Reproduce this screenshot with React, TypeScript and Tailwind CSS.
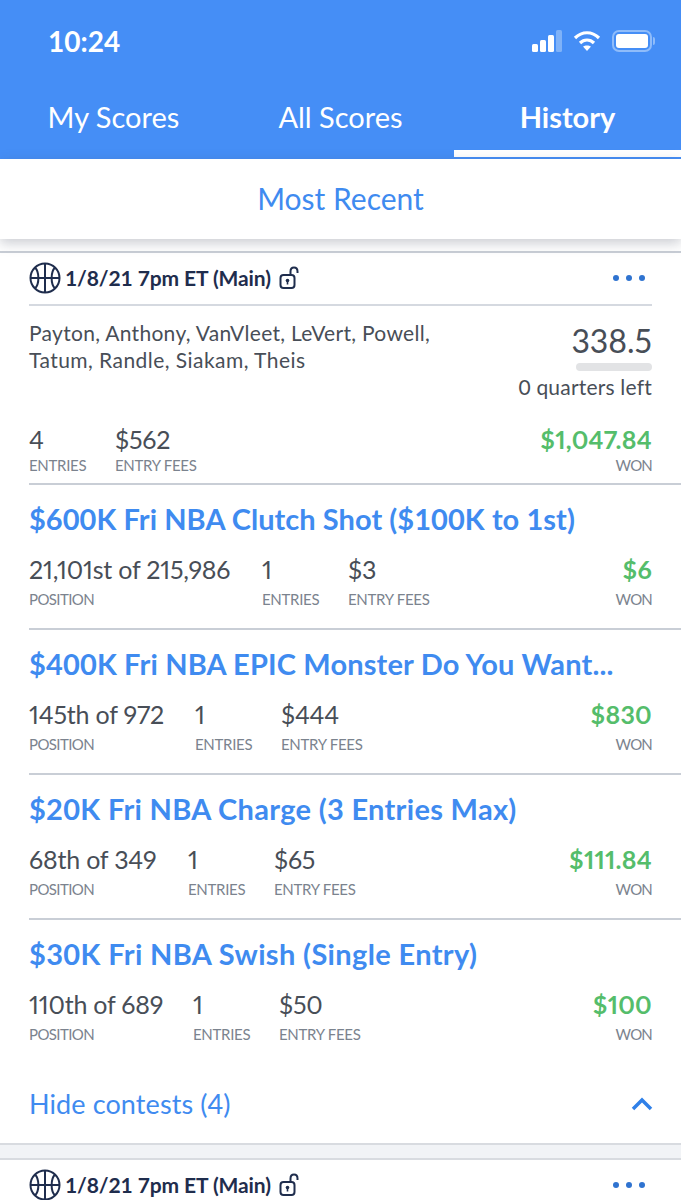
import React from "react";

const font = { fontFamily: "Lato, 'Open Sans', sans-serif" };

function Ball() {
  return (
    <svg viewBox="0 0 32 32" className="w-[32px] h-[32px] shrink-0" fill="none" stroke="#1f2d4d" strokeWidth="2">
      <circle cx="16" cy="16" r="14.5" />
      <path d="M1.5 16H30.5M16 1.5V30.5M6 5.5C10.5 10 10.5 22 6 26.5M26 5.5C21.5 10 21.5 22 26 26.5" />
    </svg>
  );
}

function Lock() {
  return (
    <svg viewBox="0 0 20 24" className="w-[20px] h-[24px] shrink-0" fill="none" stroke="#1f2d4d" strokeWidth="2">
      <rect x="1.5" y="9" width="14" height="13" rx="3" />
      <path d="M11.5 9V5.5C11.5 3 13 1.5 15 1.5C17 1.5 18.5 3 18.5 5.5V7" />
      <circle cx="8.5" cy="14.5" r="1.8" fill="#1f2d4d" stroke="none" />
      <path d="M8.5 15V18.5" strokeWidth="1.6" />
    </svg>
  );
}

function Dots() {
  return (
    <div className="flex gap-[7px] pr-[7px]">
      <span className="w-[6px] h-[6px] rounded-full bg-[#2f73d0]" />
      <span className="w-[6px] h-[6px] rounded-full bg-[#2f73d0]" />
      <span className="w-[6px] h-[6px] rounded-full bg-[#2f73d0]" />
    </div>
  );
}

function Stat({ value, label, className = "", tight = false, labelClass = "tracking-[-0.3px]" }: { value: string; label: string; className?: string; tight?: boolean; labelClass?: string }) {
  return (
    <div className={"flex flex-col whitespace-nowrap " + className}>
      <span className="text-[25px] leading-[30px] text-[#484e57] proportional-nums tracking-[-0.2px]">{value}</span>
      <span className={"text-[15px] leading-[20px] text-[#7b838e] " + labelClass + " " + (tight ? "mt-[1px]" : "mt-[5px]")}>{label}</span>
    </div>
  );
}

function Won({ value, tight = false }: { value: string; tight?: boolean }) {
  return (
    <div className="ml-auto flex flex-col items-end">
      <span className="text-[25px] leading-[30px] font-bold text-[#55bd6b] proportional-nums tracking-[0.25px]">{value}</span>
      <span className={"text-[15px] leading-[20px] text-[#7b838e] tracking-[-0.8px] " + (tight ? "mt-[1px]" : "mt-[5px]")}>WON</span>
    </div>
  );
}

function Contest({ title, titleClass, pos, posW, fee, won, last = false }: { title: string; titleClass: string; pos: string; posW: string; fee: string; won: string; last?: boolean }) {
  return (
    <div className={"h-[145px] pt-[14px] " + (last ? "" : "border-b-2 border-[#c9ced6]")}>
      <div className={"text-[29px] leading-[40px] font-bold text-[#3f8bf0] whitespace-nowrap " + titleClass}>{title}</div>
      <div className="flex mt-[15px]">
        <Stat value={pos} label="POSITION" className={posW} labelClass="tracking-[-0.6px]" />
        <Stat value="1" label="ENTRIES" className="w-[86px]" />
        <Stat value={fee} label="ENTRY FEES" />
        <Won value={won} />
      </div>
    </div>
  );
}

function CardHeader() {
  return (
    <div className="flex items-center gap-[4px] h-[53px] pb-[1px] border-b-2 border-[#d5d9e0]">
      <Ball />
      <span className="text-[21px] font-bold text-[#1f2d4d] whitespace-nowrap tracking-[-0.1px]">1/8/21 7pm ET (Main)</span>
      <span className="ml-[4px]"><Lock /></span>
      <div className="ml-auto"><Dots /></div>
    </div>
  );
}

export default function App() {
  return (
    <div className="w-[681px] h-[1200px] overflow-hidden bg-white" style={font}>
      <header className="bg-[#458ef6] h-[159px] text-white relative">
        <div className="flex items-center justify-between h-[82px] pl-[48px] pr-[26px]">
          <span className="text-[28px] font-bold">10:24</span>
          <div className="flex items-center gap-[11px]">
            <svg width="30" height="22" viewBox="0 0 30 22">
              <rect x="0" y="14" width="6" height="8" rx="1.5" fill="#fff" />
              <rect x="8" y="10" width="6" height="12" rx="1.5" fill="#fff" />
              <rect x="16" y="5" width="6" height="17" rx="1.5" fill="#fff" />
              <rect x="24" y="0" width="6" height="22" rx="1.5" fill="#7fb2f8" />
            </svg>
            <svg width="28" height="22" viewBox="0 0 28 22" fill="none" stroke="#fff" strokeWidth="3.2">
              <path d="M2 8C9 1 19 1 26 8" />
              <path d="M7 13C11 9 17 9 21 13" />
              <path d="M14 21L10 16.5C12 15 16 15 18 16.5Z" fill="#fff" stroke="none" />
            </svg>
            <div className="flex items-center">
              <div className="w-[40px] h-[22px] rounded-[7px] border-2 border-[#8fbcfa] p-[2px]">
                <div className="w-full h-full rounded-[3px] bg-white" />
              </div>
              <div className="w-[2px] h-[8px] ml-[1px] rounded-r bg-[#8fbcfa]" />
            </div>
          </div>
        </div>
        <nav className="flex h-[70px] text-[29px] items-center">
          <div className="w-[227px] text-center">My Scores</div>
          <div className="w-[227px] text-center">All Scores</div>
          <div className="w-[227px] text-center font-bold">History</div>
        </nav>
        <div className="absolute right-0 bottom-[2px] w-[227px] h-[7px] bg-white" />
      </header>

      <div className="relative z-10 bg-white h-[80px] pb-[2px] flex items-center justify-center text-[30px] text-[#3f8bf0] shadow-[0_4px_12px_rgba(60,70,90,0.28)]">
        Most Recent
      </div>

      <div className="h-[12px]" />
      <section className="border-t-2 border-[#c9ced6]">
        <div className="px-[29px]">
          <CardHeader />
          <div className="flex justify-between mt-[13px]">
            <div className="text-[21px] leading-[27px] text-[#484e57] whitespace-nowrap tracking-[0.3px]">
              Payton, Anthony, VanVleet, LeVert, Powell,
              <br />
              <span className="tracking-[0.45px]">Tatum, Randle, Siakam, Theis</span>
            </div>
            <div className="flex flex-col items-end pt-[2px]">
              <span className="text-[32px] leading-[40px] text-[#484e57] proportional-nums">338.5</span>
              <div className="w-[76px] h-[8px] rounded-full bg-[#e2e3e5] mt-[2px]" />
              <span className="text-[21px] leading-[28px] mt-[2px] text-[#484e57] whitespace-nowrap tracking-[0.2px]">0 quarters left</span>
            </div>
          </div>
          <div className="flex h-[59px] mt-[23px]">
            <Stat value="4" label="ENTRIES" className="w-[86px]" tight />
            <Stat value="$562" label="ENTRY FEES" tight />
            <Won value="$1,047.84" tight />
          </div>
        </div>
        <div className="ml-[29px] border-t-2 border-[#c9ced6]" />
        <div className="pl-[29px]">
          <div className="[&>div]:pr-[29px]">
            <Contest title="$600K Fri NBA Clutch Shot ($100K to 1st)" titleClass="tracking-[0.05px]" pos="21,101st of 215,986" posW="w-[233px]" fee="$3" won="$6" />
            <Contest title="$400K Fri NBA EPIC Monster Do You Want..." titleClass="tracking-[0.15px]" pos="145th of 972" posW="w-[166px]" fee="$444" won="$830" />
            <Contest title="$20K Fri NBA Charge (3 Entries Max)" titleClass="tracking-[0.3px]" pos="68th of 349" posW="w-[159px]" fee="$65" won="$111.84" />
            <Contest title="$30K Fri NBA Swish (Single Entry)" titleClass="tracking-[0.35px]" pos="110th of 689" posW="w-[164px]" fee="$50" won="$100" last />
          </div>
          <div className="flex items-center justify-between h-[78px] pr-[29px]">
            <span className="text-[27px] tracking-[0.1px] text-[#3f8bf0]">Hide contests (4)</span>
            <svg width="22" height="14" viewBox="0 0 22 14" fill="none" stroke="#2f80e8" strokeWidth="3.5" className="mr-[-1px]">
              <path d="M2 12L11 3L20 12" />
            </svg>
          </div>
        </div>
      </section>
      <div className="h-[17px] bg-[#f1f3f6] border-y-2 border-[#d8dbe0]" />
      <div className="px-[29px]">
        <CardHeader />
      </div>
    </div>
  );
}
